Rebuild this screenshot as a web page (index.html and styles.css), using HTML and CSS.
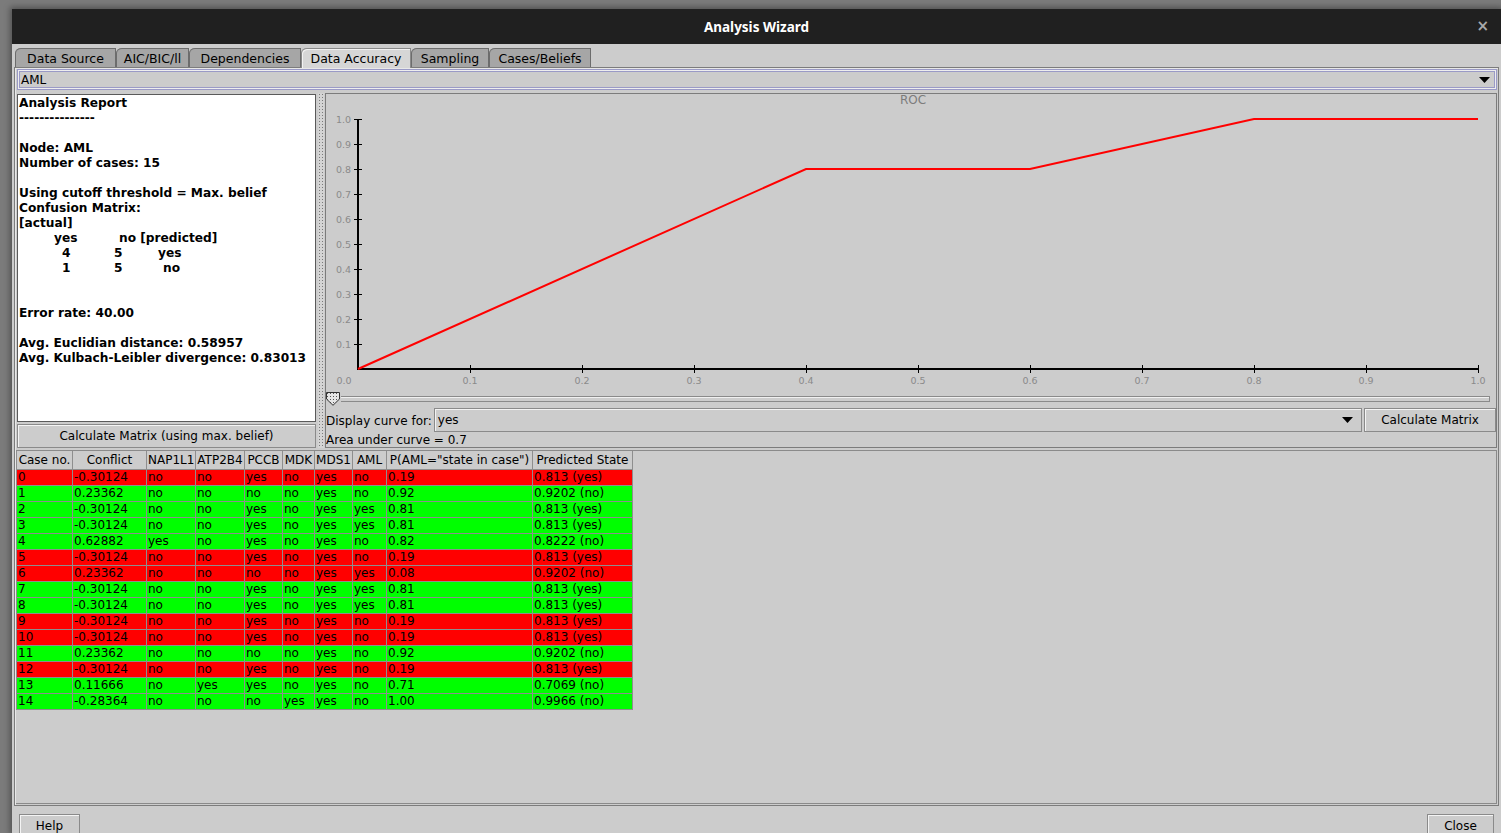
FILE: index.html
```html
<!DOCTYPE html>
<html>
<head>
<meta charset="utf-8">
<title>Analysis Wizard</title>
<link rel="stylesheet" href="styles.css">
</head>
<body>
<div class="window">
  <div class="titlebar">
    <span></span>
    <span class="title">Analysis Wizard</span>
    <span class="close">×</span>
  </div>
  <div class="tabs">
    <div class="tab t1">Data Source</div>
    <div class="tab t2">AIC/BIC/ll</div>
    <div class="tab t3">Dependencies</div>
    <div class="tab t4 selected">Data Accuracy</div>
    <div class="tab t5">Sampling</div>
    <div class="tab t6">Cases/Beliefs</div>
  </div>
  <div class="panel">
    <div class="combo node-combo">
      <span class="combo-text">AML</span>
      <svg class="arrow" width="11" height="6" viewBox="0 0 11 6"><polygon points="0,0 11,0 5.5,6" fill="#000"/></svg>
    </div>
    <div class="upper">
      <div class="left">
        <div class="report">
          <div>Analysis Report</div>
          <div>---------------</div>
          <div class="blank"></div>
          <div>Node: AML</div>
          <div>Number of cases: 15</div>
          <div class="blank"></div>
          <div>Using cutoff threshold = Max. belief</div>
          <div>Confusion Matrix:</div>
          <div>[actual]</div>
          <div><span class="m-pad1"></span><span class="m-yes">yes</span><span>no [predicted]</span></div>
          <div><span class="m-pad2"></span><span class="m-c1">4</span><span class="m-c2">5</span><span>yes</span></div>
          <div><span class="m-pad2"></span><span class="m-c1">1</span><span class="m-c2b">5</span><span>no</span></div>
          <div class="blank"></div>
          <div class="blank"></div>
          <div>Error rate: 40.00</div>
          <div class="blank"></div>
          <div>Avg. Euclidian distance: 0.58957</div>
          <div>Avg. Kulbach-Leibler divergence: 0.83013</div>
        </div>
        <div class="btn calc-left">Calculate Matrix (using max. belief)</div>
      </div>
      <div class="splitter"><div class="grip"></div></div>
      <div class="right">
        <svg class="chart" width="1169" height="297" viewBox="0 0 1169 297">
          <text class="chart-title" x="587" y="10" text-anchor="middle">ROC</text>
          <g class="ylabels" text-anchor="end">
            <text x="25" y="29">1.0</text>
            <text x="25" y="54">0.9</text>
            <text x="25" y="79">0.8</text>
            <text x="25" y="104">0.7</text>
            <text x="25" y="129">0.6</text>
            <text x="25" y="154">0.5</text>
            <text x="25" y="179">0.4</text>
            <text x="25" y="204">0.3</text>
            <text x="25" y="229">0.2</text>
            <text x="25" y="254">0.1</text>
          </g>
          <g class="xlabels" text-anchor="middle">
            <text x="18" y="290">0.0</text>
            <text x="144" y="290">0.1</text>
            <text x="256" y="290">0.2</text>
            <text x="368" y="290">0.3</text>
            <text x="480" y="290">0.4</text>
            <text x="592" y="290">0.5</text>
            <text x="704" y="290">0.6</text>
            <text x="816" y="290">0.7</text>
            <text x="928" y="290">0.8</text>
            <text x="1040" y="290">0.9</text>
            <text x="1152" y="290">1.0</text>
          </g>
          <g stroke="#000" stroke-width="1">
            <line x1="28" y1="25.5" x2="36" y2="25.5"/>
            <line x1="28" y1="50.5" x2="36" y2="50.5"/>
            <line x1="28" y1="75.5" x2="36" y2="75.5"/>
            <line x1="28" y1="100.5" x2="36" y2="100.5"/>
            <line x1="28" y1="125.5" x2="36" y2="125.5"/>
            <line x1="28" y1="150.5" x2="36" y2="150.5"/>
            <line x1="28" y1="175.5" x2="36" y2="175.5"/>
            <line x1="28" y1="200.5" x2="36" y2="200.5"/>
            <line x1="28" y1="225.5" x2="36" y2="225.5"/>
            <line x1="28" y1="250.5" x2="36" y2="250.5"/>
            <line x1="144.5" y1="271" x2="144.5" y2="279"/>
            <line x1="256.5" y1="271" x2="256.5" y2="279"/>
            <line x1="368.5" y1="271" x2="368.5" y2="279"/>
            <line x1="480.5" y1="271" x2="480.5" y2="279"/>
            <line x1="592.5" y1="271" x2="592.5" y2="279"/>
            <line x1="704.5" y1="271" x2="704.5" y2="279"/>
            <line x1="816.5" y1="271" x2="816.5" y2="279"/>
            <line x1="928.5" y1="271" x2="928.5" y2="279"/>
            <line x1="1040.5" y1="271" x2="1040.5" y2="279"/>
            <line x1="1152.5" y1="271" x2="1152.5" y2="279"/>
          </g>
          <g stroke="#000" stroke-width="2">
            <line x1="32" y1="25" x2="32" y2="276"/>
            <line x1="31" y1="275" x2="1153" y2="275"/>
          </g>
          <polyline points="32,275 480,75 704,75 928,25 1152,25" fill="none" stroke="#ff0000" stroke-width="2"/>
        </svg>
        <div class="slider">
          <svg class="thumb" width="15" height="14" viewBox="0 0 15 14">
            <defs>
              <pattern id="dots" width="3" height="3" patternUnits="userSpaceOnUse">
                <rect width="3" height="3" fill="#e6e6e6"/>
                <rect x="1" y="1" width="1" height="1" fill="#555"/>
              </pattern>
            </defs>
            <polygon points="0.5,0.5 13.5,0.5 13.5,7 7,13.3 0.5,7" fill="url(#dots)" stroke="#333" stroke-width="1"/>
          </svg>
          <div class="track"></div>
        </div>
        <div class="curve-row">
          <span class="label">Display curve for:</span>
          <div class="combo curve-combo">
            <span class="combo-text">yes</span>
            <svg class="arrow" width="11" height="6" viewBox="0 0 11 6"><polygon points="0,0 11,0 5.5,6" fill="#000"/></svg>
          </div>
          <div class="btn calc-right">Calculate Matrix</div>
        </div>
        <div class="area">Area under curve = 0.7</div>
      </div>
    </div>
    <div class="table-pane">
      <table class="cases">
        <colgroup>
          <col class="w-case"><col class="w-conf"><col class="w-nap"><col class="w-atp"><col class="w-pccb"><col class="w-mdk"><col class="w-mds"><col class="w-aml"><col class="w-p"><col class="w-pred">
        </colgroup>
        <thead>
          <tr><th>Case no.</th><th>Conflict</th><th>NAP1L1</th><th>ATP2B4</th><th>PCCB</th><th>MDK</th><th>MDS1</th><th>AML</th><th>P(AML="state in case")</th><th>Predicted State</th></tr>
        </thead>
        <tbody>
          <tr class="bad"><td>0</td><td>-0.30124</td><td>no</td><td>no</td><td>yes</td><td>no</td><td>yes</td><td>no</td><td>0.19</td><td>0.813 (yes)</td></tr>
          <tr class="good"><td>1</td><td>0.23362</td><td>no</td><td>no</td><td>no</td><td>no</td><td>yes</td><td>no</td><td>0.92</td><td>0.9202 (no)</td></tr>
          <tr class="good"><td>2</td><td>-0.30124</td><td>no</td><td>no</td><td>yes</td><td>no</td><td>yes</td><td>yes</td><td>0.81</td><td>0.813 (yes)</td></tr>
          <tr class="good"><td>3</td><td>-0.30124</td><td>no</td><td>no</td><td>yes</td><td>no</td><td>yes</td><td>yes</td><td>0.81</td><td>0.813 (yes)</td></tr>
          <tr class="good"><td>4</td><td>0.62882</td><td>yes</td><td>no</td><td>yes</td><td>no</td><td>yes</td><td>no</td><td>0.82</td><td>0.8222 (no)</td></tr>
          <tr class="bad"><td>5</td><td>-0.30124</td><td>no</td><td>no</td><td>yes</td><td>no</td><td>yes</td><td>no</td><td>0.19</td><td>0.813 (yes)</td></tr>
          <tr class="bad"><td>6</td><td>0.23362</td><td>no</td><td>no</td><td>no</td><td>no</td><td>yes</td><td>yes</td><td>0.08</td><td>0.9202 (no)</td></tr>
          <tr class="good"><td>7</td><td>-0.30124</td><td>no</td><td>no</td><td>yes</td><td>no</td><td>yes</td><td>yes</td><td>0.81</td><td>0.813 (yes)</td></tr>
          <tr class="good"><td>8</td><td>-0.30124</td><td>no</td><td>no</td><td>yes</td><td>no</td><td>yes</td><td>yes</td><td>0.81</td><td>0.813 (yes)</td></tr>
          <tr class="bad"><td>9</td><td>-0.30124</td><td>no</td><td>no</td><td>yes</td><td>no</td><td>yes</td><td>no</td><td>0.19</td><td>0.813 (yes)</td></tr>
          <tr class="bad"><td>10</td><td>-0.30124</td><td>no</td><td>no</td><td>yes</td><td>no</td><td>yes</td><td>no</td><td>0.19</td><td>0.813 (yes)</td></tr>
          <tr class="good"><td>11</td><td>0.23362</td><td>no</td><td>no</td><td>no</td><td>no</td><td>yes</td><td>no</td><td>0.92</td><td>0.9202 (no)</td></tr>
          <tr class="bad"><td>12</td><td>-0.30124</td><td>no</td><td>no</td><td>yes</td><td>no</td><td>yes</td><td>no</td><td>0.19</td><td>0.813 (yes)</td></tr>
          <tr class="good"><td>13</td><td>0.11666</td><td>no</td><td>yes</td><td>yes</td><td>no</td><td>yes</td><td>no</td><td>0.71</td><td>0.7069 (no)</td></tr>
          <tr class="good"><td>14</td><td>-0.28364</td><td>no</td><td>no</td><td>no</td><td>yes</td><td>yes</td><td>no</td><td>1.00</td><td>0.9966 (no)</td></tr>
        </tbody>
      </table>
    </div>
  </div>
  <div class="footer">
    <div class="btn help">Help</div>
    <div class="btn close-btn">Close</div>
  </div>
</div>
</body>
</html>
```

FILE: styles.css
```css
* { box-sizing: border-box; }

html, body {
  margin: 0;
  background: #7b7b7b;
}

body {
  width: 1501px;
  height: 833px;
  overflow: hidden;
  padding: 9px 0 0 12px;
  font-family: "DejaVu Sans", sans-serif;
  font-size: 12px;
  color: #000;
}

.window {
  width: 1489px;
  height: 824px;
  background: #cccccc;
  overflow: hidden;
  box-shadow: 0 0 6px 2px rgba(0, 0, 0, 0.35);
}

/* title bar */
.titlebar {
  height: 35px;
  background: #202020;
  display: grid;
  grid-template-columns: 1fr auto 1fr;
  align-items: center;
}
.title {
  color: #ffffff;
  font-family: "Noto Sans", "DejaVu Sans", sans-serif;
  font-weight: bold;
  font-size: 13.5px;
}
.close {
  justify-self: end;
  padding-right: 12px;
  color: #aaaaaa;
  font-size: 15px;
  font-weight: bold;
  line-height: 1;
}

/* tabs */
.tabs {
  display: flex;
  height: 19px;
  margin: 4px 0 0 3px;
  position: relative;
  z-index: 1;
}
.tab {
  height: 19px;
  display: flex;
  align-items: center;
  justify-content: center;
  background: #a6a6a6;
  border: 1px solid #6c6c6c;
  border-bottom: none;
  border-top-left-radius: 6px 5px;
  font-size: 12.5px;
  padding-top: 1px;
}
.tab.selected {
  background: #d6d6d6;
  height: 20px;
  padding-top: 0;
  padding-bottom: 0;
  border-color: #8a8a8a;
  box-shadow: inset 1px 1px 0 #f2f2f2;
}
.t1 { width: 101px; }
.t2 { width: 73px; }
.t3 { width: 112px; }
.t4 { width: 110px; }
.t5 { width: 78px; }
.t6 { width: 102px; }

/* main panel */
.panel {
  margin: 0 2px;
  height: 739px;
  border: 1px solid #7c7c7c;
  box-shadow: inset 1px 1px 0 #e8e8e8;
  padding: 1px 1px 1px 2px;
  display: flex;
  flex-direction: column;
}

.combo {
  display: flex;
  align-items: center;
  background: #cccccc;
}
.combo-text { flex: 1; }
.node-combo {
  height: 21px;
  border: 1px solid #9a9ac6;
  box-shadow: 0 0 0 1px #eeeeee inset, 0 0 0 2px #9a9ac6 inset;
  padding: 1px 3px 0 3px;
}
.node-combo .arrow { margin-right: 3px; }

.upper {
  margin-top: 3px;
  height: 355px;
  display: flex;
}

.left {
  width: 299px;
  padding-top: 1px;
  display: flex;
  flex-direction: column;
}
.report {
  height: 328px;
  background: #ffffff;
  border: 1px solid #5a5a5a;
  padding: 1px 0 0 1px;
  font-weight: bold;
  font-size: 12.2px;
  line-height: 15px;
  white-space: nowrap;
  overflow: hidden;
}
.report .blank { height: 15px; }
.m-pad1 { display: inline-block; width: 35px; }
.m-yes { display: inline-block; width: 65px; }
.m-pad2 { display: inline-block; width: 43px; }
.m-c1 { display: inline-block; width: 52px; }
.m-c2 { display: inline-block; width: 44px; }
.m-c2b { display: inline-block; width: 49px; }

.btn {
  display: flex;
  align-items: center;
  justify-content: center;
  background: #cccccc;
  border: 1px solid #8a8a8a;
  box-shadow: inset 1px 1px 0 #f4f4f4;
  font-size: 12px;
}
.calc-left {
  margin-top: 2px;
  height: 24px;
}

.splitter {
  width: 9px;
  padding: 0 1px 0 2px;
}
.grip {
  height: 100%;
  width: 6px;
  background-color: #d4d4d4;
  background-image: radial-gradient(circle, #7a7a7a 0.6px, transparent 0.9px);
  background-size: 3px 3px;
}

.right {
  flex: 1;
  border: 1px solid #7c7c7c;
  display: flex;
  flex-direction: column;
  min-width: 0;
}
.chart {
  display: block;
  height: 297px;
}
.chart text { font-family: "DejaVu Sans", sans-serif; }
.chart-title { font-size: 12px; fill: #7c7c7c; }
.ylabels text, .xlabels text { font-size: 9.5px; fill: #8a8a8a; }

.slider {
  height: 15px;
  display: flex;
  align-items: center;
}
.thumb { display: block; flex: none; }
.track {
  width: 1149px;
  height: 6px;
  border: 1px solid #8a8a8a;
  border-left: none;
  box-shadow: inset 0 1px 0 #f0f0f0;
  margin-top: 1px;
}

.curve-row {
  margin-top: 2px;
  height: 24px;
  display: flex;
  gap: 2px;
}
.label {
  align-self: center;
  padding-top: 1px;
}
.curve-combo {
  flex: 1;
  border: 1px solid #8a8a8a;
  box-shadow: inset 1px 1px 0 #f2f2f2;
  padding: 0 8px 0 3px;
}
.calc-right { width: 132px; }

.area {
  height: 15px;
  padding-top: 2px;
  line-height: 13px;
}

/* table */
.table-pane {
  margin-top: 2px;
  margin-left: -1px;
  height: 354px;
  border: 1px solid #8a8a8a;
  border-left: none;
  overflow: hidden;
}
.cases {
  border-collapse: collapse;
  table-layout: fixed;
  width: 616px;
  font-size: 12px;
}
.w-case { width: 56px; }
.w-conf { width: 74px; }
.w-nap { width: 49px; }
.w-atp { width: 49px; }
.w-pccb { width: 38px; }
.w-mdk { width: 32px; }
.w-mds { width: 38px; }
.w-aml { width: 34px; }
.w-p { width: 146px; }
.w-pred { width: 100px; }

.cases th {
  height: 18px;
  padding: 0 1px;
  font-weight: normal;
  text-align: center;
  background: #cccccc;
  border: 1px solid #8e8e8e;
  border-top: none;
  white-space: nowrap;
  overflow: hidden;
}
.cases td {
  height: 16px;
  padding: 0 1px;
  line-height: 15px;
  border: 1px solid #8e8e8e;
  white-space: nowrap;
  overflow: hidden;
}
.cases tr.bad td { background: #ff0000; }
.cases tr.good td { background: #00ff00; }

/* footer */
.footer {
  display: flex;
  justify-content: space-between;
  padding: 8px 7px 0 7px;
}
.help { width: 61px; height: 26px; padding-bottom: 2px; }
.close-btn { width: 67px; height: 26px; padding-bottom: 2px; }
```
